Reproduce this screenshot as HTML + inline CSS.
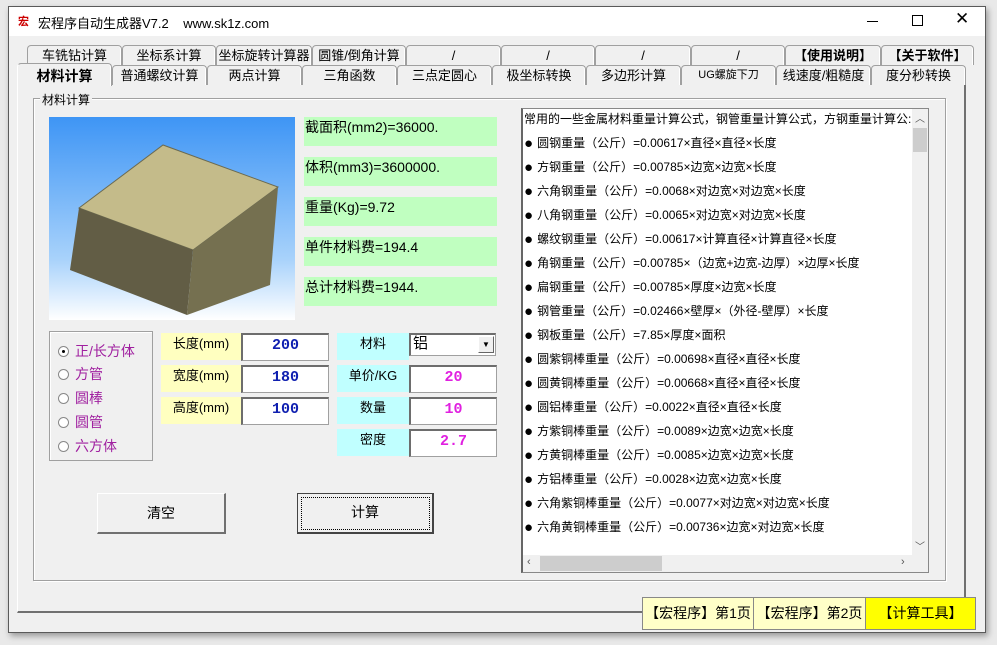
<!DOCTYPE html>
<html><head><meta charset="utf-8"><style>
*{margin:0;padding:0;box-sizing:border-box}
body{width:997px;height:645px;background:#e9e9e9;position:relative;overflow:hidden;font-family:"Liberation Sans","Noto Sans CJK SC",sans-serif;font-size:12px;color:#000}
.a{position:absolute}
.win{left:8px;top:6px;width:978px;height:627px;background:#f0f0f0;border:1px solid #5a5a5a;box-shadow:2px 3px 6px rgba(0,0,0,.35)}
.title{left:9px;top:7px;width:976px;height:29px;background:#fff}
.tab{position:absolute;height:20px;background:#f0f0f0;border:1px solid #a0a0a0;border-bottom:none;border-radius:4px 4px 0 0;text-align:center;font-size:13px;line-height:19px;box-shadow:inset -1px 0 #fff}
.lbl{position:absolute;text-align:center;font-size:13px}
.in{position:absolute;background:#fff;border:1px solid #a0a0a0;border-top:2px solid #6d6d6d;border-left:2px solid #6d6d6d;text-align:center;font-family:"Liberation Mono","Noto Sans CJK SC",monospace;font-weight:bold;font-size:15px;line-height:22px}
.g{position:absolute;left:304px;width:193px;height:29px;background:#c0ffc0;font-size:14px;line-height:20px;padding-left:1px}
.li{position:absolute;left:524px;font-size:12px;white-space:nowrap}
.li b{font-size:15px;font-weight:normal;margin-right:4px;vertical-align:-1px}
.rad{position:absolute;left:58px;font-size:14px;color:#a020a0}
.rad i{display:inline-block;width:11px;height:11px;border-radius:50%;border:1px solid #888;background:#fff;margin-right:6px;vertical-align:-1px;position:relative}
.btn{position:absolute;background:#f0f0f0;border:1px solid #fff;border-right:2px solid #707070;border-bottom:2px solid #707070;text-align:center;font-size:14px}
.bb{position:absolute;top:597px;height:33px;border:1px solid #888;text-align:center;font-size:14px;line-height:31px}
</style></head><body>
<div class="a win"></div>
<div class="a title"></div>
<div class="a" style="left:18px;top:13px;color:#c00;font-size:11px;font-weight:bold">宏</div>
<div class="a" style="left:38px;top:13px;font-size:13px">宏程序自动生成器V7.2&nbsp;&nbsp;&nbsp; www.sk1z.com</div>
<div class="a" style="left:867px;top:21px;width:11px;height:1px;background:#000"></div>
<div class="a" style="left:912px;top:15px;width:11px;height:11px;border:1px solid #000"></div>
<div class="a" style="left:955px;top:9px;font-size:17px">✕</div>

<div class="tab" style="left:27px;top:45px;width:95px">车铣钻计算</div>
<div class="tab" style="left:122px;top:45px;width:94px">坐标系计算</div>
<div class="tab" style="left:216px;top:45px;width:96px">坐标旋转计算器</div>
<div class="tab" style="left:312px;top:45px;width:94px">圆锥/倒角计算</div>
<div class="tab" style="left:406px;top:45px;width:95px">/</div>
<div class="tab" style="left:501px;top:45px;width:94px">/</div>
<div class="tab" style="left:595px;top:45px;width:96px">/</div>
<div class="tab" style="left:691px;top:45px;width:94px">/</div>
<div class="tab" style="left:785px;top:45px;width:96px;font-weight:bold">【使用说明】</div>
<div class="tab" style="left:881px;top:45px;width:93px;font-weight:bold">【关于软件】</div>
<div class="a" style="left:17px;top:84px;width:949px;height:529px;border:1px solid #fff;border-right:2px solid #707070;border-bottom:2px solid #707070"></div>
<div class="tab" style="left:112px;top:65px;width:95px">普通螺纹计算</div>
<div class="tab" style="left:207px;top:65px;width:95px">两点计算</div>
<div class="tab" style="left:302px;top:65px;width:95px">三角函数</div>
<div class="tab" style="left:397px;top:65px;width:95px">三点定圆心</div>
<div class="tab" style="left:492px;top:65px;width:94px">极坐标转换</div>
<div class="tab" style="left:586px;top:65px;width:95px">多边形计算</div>
<div class="tab" style="left:681px;top:65px;width:95px;font-size:11px">UG螺旋下刀</div>
<div class="tab" style="left:776px;top:65px;width:95px">线速度/粗糙度</div>
<div class="tab" style="left:871px;top:65px;width:95px">度分秒转换</div>
<div class="tab" style="left:17px;top:63px;width:95px;height:23px;font-weight:bold;font-size:14px;line-height:24px;border-left:1px solid #fff">材料计算</div>

<div class="a" style="left:33px;top:98px;width:913px;height:483px;border:1px solid #a0a0a0;box-shadow:inset 1px 1px #fff,1px 1px #fff"></div>
<div class="a" style="left:40px;top:91px;background:#f0f0f0;padding:0 2px;font-size:12px">材料计算</div>

<div class="a" style="left:49px;top:117px;width:246px;height:203px;background:linear-gradient(#3e95f5,#a8d2fb 70%,#fff)">
<svg width="246" height="203" style="position:absolute;left:0;top:0">
<polygon points="30,91 114,28 229,70 144,133" fill="#c4bb8a" stroke="#6b6a50"/>
<polygon points="30,91 144,133 138,198 21,153" fill="#625d45"/>
<polygon points="144,133 229,70 221,168 138,198" fill="#757050"/>
</svg></div>

<div class="g" style="top:117px">截面积(mm2)=36000.</div>
<div class="g" style="top:157px">体积(mm3)=3600000.</div>
<div class="g" style="top:197px">重量(Kg)=9.72</div>
<div class="g" style="top:237px">单件材料费=194.4</div>
<div class="g" style="top:277px">总计材料费=1944.</div>

<div class="a" style="left:49px;top:331px;width:104px;height:130px;border:1px solid #a0a0a0;box-shadow:inset 1px 1px #fff"></div>
<div class="rad" style="top:341px"><i><b style="position:absolute;left:3px;top:3px;width:3px;height:3px;background:#000;border-radius:50%"></b></i>正/长方体</div>
<div class="rad" style="top:364px"><i></i>方管</div>
<div class="rad" style="top:388px"><i></i>圆棒</div>
<div class="rad" style="top:412px"><i></i>圆管</div>
<div class="rad" style="top:436px"><i></i>六方体</div>

<div class="lbl" style="left:161px;top:333px;width:80px;height:27px;background:#ffffc0">长度(mm)</div>
<div class="lbl" style="left:161px;top:365px;width:80px;height:27px;background:#ffffc0">宽度(mm)</div>
<div class="lbl" style="left:161px;top:397px;width:80px;height:27px;background:#ffffc0">高度(mm)</div>
<div class="in" style="left:241px;top:333px;width:88px;height:28px;color:#1020b0">200</div>
<div class="in" style="left:241px;top:365px;width:88px;height:28px;color:#1020b0">180</div>
<div class="in" style="left:241px;top:397px;width:88px;height:28px;color:#1020b0">100</div>
<div class="lbl" style="left:337px;top:333px;width:72px;height:27px;background:#c0ffff">材料</div>
<div class="lbl" style="left:337px;top:365px;width:72px;height:27px;background:#c0ffff">单价/KG</div>
<div class="lbl" style="left:337px;top:397px;width:72px;height:27px;background:#c0ffff">数量</div>
<div class="lbl" style="left:337px;top:429px;width:72px;height:27px;background:#c0ffff">密度</div>
<div class="a" style="left:409px;top:333px;width:87px;height:23px;background:#fff;border:1px solid #a0a0a0;border-top:2px solid #6d6d6d;border-left:2px solid #6d6d6d;font-size:15px;line-height:18px;padding-left:2px">铝</div>
<div class="a" style="left:478px;top:336px;width:16px;height:17px;background:#f0f0f0;border:1px solid #fff;border-right:1px solid #666;border-bottom:1px solid #666;font-size:8px;text-align:center;line-height:16px">▼</div>
<div class="in" style="left:409px;top:365px;width:88px;height:28px;color:#e020e0">20</div>
<div class="in" style="left:409px;top:397px;width:88px;height:28px;color:#e020e0">10</div>
<div class="in" style="left:409px;top:429px;width:88px;height:28px;color:#e020e0">2.7</div>

<div class="btn" style="left:97px;top:493px;width:129px;height:41px;line-height:38px">清空</div>
<div class="btn" style="left:297px;top:493px;width:137px;height:41px;line-height:36px;border:1px solid #444;border-right:2px solid #444;border-bottom:2px solid #444"><div style="position:absolute;left:3px;top:3px;right:2px;bottom:2px;border:1px dotted #000"></div>计算</div>

<div class="a" style="left:521px;top:108px;width:408px;height:465px;background:#fff;border:1px solid #888;border-left:2px solid #666"></div>
<div class="li" style="top:110px">常用的一些金属材料重量计算公式，钢管重量计算公式，方钢重量计算公:</div>
<div class="li" style="top:134px"><b>●</b>圆钢重量（公斤）=0.00617×直径×直径×长度</div>
<div class="li" style="top:158px"><b>●</b>方钢重量（公斤）=0.00785×边宽×边宽×长度</div>
<div class="li" style="top:182px"><b>●</b>六角钢重量（公斤）=0.0068×对边宽×对边宽×长度</div>
<div class="li" style="top:206px"><b>●</b>八角钢重量（公斤）=0.0065×对边宽×对边宽×长度</div>
<div class="li" style="top:230px"><b>●</b>螺纹钢重量（公斤）=0.00617×计算直径×计算直径×长度</div>
<div class="li" style="top:254px"><b>●</b>角钢重量（公斤）=0.00785×（边宽+边宽-边厚）×边厚×长度</div>
<div class="li" style="top:278px"><b>●</b>扁钢重量（公斤）=0.00785×厚度×边宽×长度</div>
<div class="li" style="top:302px"><b>●</b>钢管重量（公斤）=0.02466×壁厚×（外径-壁厚）×长度</div>
<div class="li" style="top:326px"><b>●</b>钢板重量（公斤）=7.85×厚度×面积</div>
<div class="li" style="top:350px"><b>●</b>圆紫铜棒重量（公斤）=0.00698×直径×直径×长度</div>
<div class="li" style="top:374px"><b>●</b>圆黄铜棒重量（公斤）=0.00668×直径×直径×长度</div>
<div class="li" style="top:398px"><b>●</b>圆铝棒重量（公斤）=0.0022×直径×直径×长度</div>
<div class="li" style="top:422px"><b>●</b>方紫铜棒重量（公斤）=0.0089×边宽×边宽×长度</div>
<div class="li" style="top:446px"><b>●</b>方黄铜棒重量（公斤）=0.0085×边宽×边宽×长度</div>
<div class="li" style="top:470px"><b>●</b>方铝棒重量（公斤）=0.0028×边宽×边宽×长度</div>
<div class="li" style="top:494px"><b>●</b>六角紫铜棒重量（公斤）=0.0077×对边宽×对边宽×长度</div>
<div class="li" style="top:518px"><b>●</b>六角黄铜棒重量（公斤）=0.00736×边宽×对边宽×长度</div>
<div class="a" style="left:912px;top:109px;width:16px;height:446px;background:#f0f0f0"></div>
<div class="a" style="left:913px;top:128px;width:14px;height:24px;background:#cdcdcd"></div>
<div class="a" style="left:915px;top:110px;font-size:10px;color:#555">︿</div>
<div class="a" style="left:915px;top:538px;font-size:10px;color:#555">﹀</div>
<div class="a" style="left:523px;top:555px;width:405px;height:17px;background:#f0f0f0"></div>
<div class="a" style="left:540px;top:556px;width:122px;height:15px;background:#cdcdcd"></div>
<div class="a" style="left:527px;top:556px;font-size:11px;color:#555">‹</div>
<div class="a" style="left:901px;top:556px;font-size:11px;color:#555">›</div>

<div class="bb" style="left:642px;width:112px;background:#ffffc8">【宏程序】第1页</div>
<div class="bb" style="left:753px;width:113px;background:#ffffc8">【宏程序】第2页</div>
<div class="bb" style="left:865px;width:111px;background:#ffff00">【计算工具】</div>
</body></html>
